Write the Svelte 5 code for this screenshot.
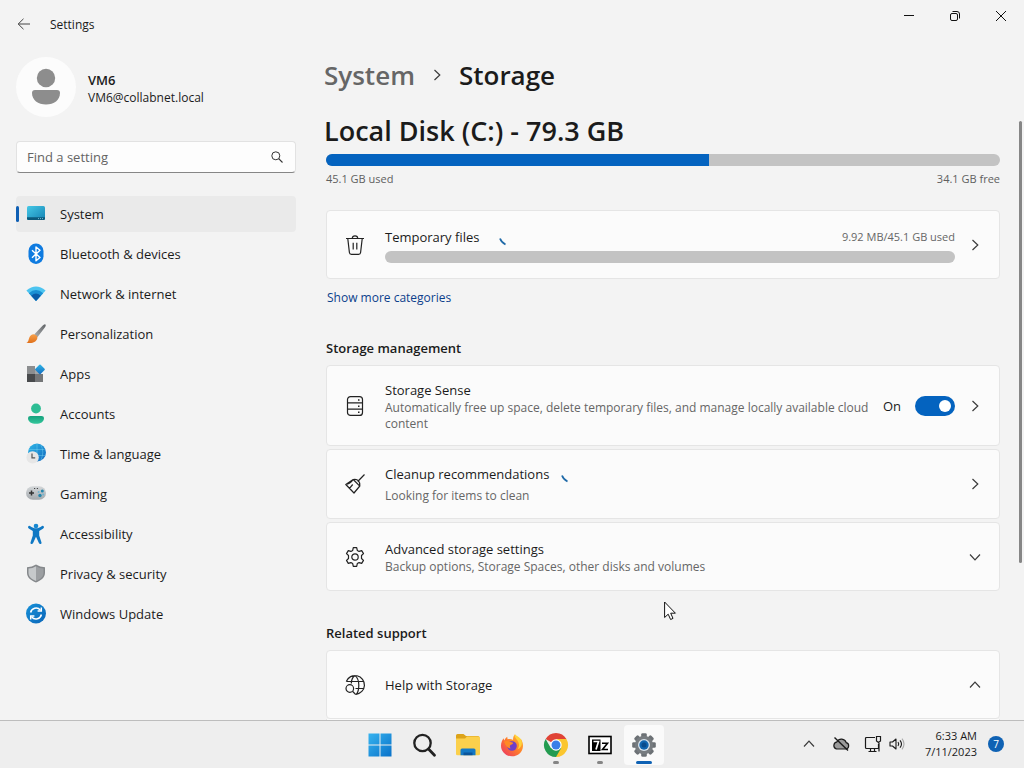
<script>
  let search = $state("");
  let senseOn = $state(true);
  let current = $state("System");

  const nav = [
    "System",
    "Bluetooth & devices",
    "Network & internet",
    "Personalization",
    "Apps",
    "Accounts",
    "Time & language",
    "Gaming",
    "Accessibility",
    "Privacy & security",
    "Windows Update",
  ];

  const disk = { used: 45.1, free: 34.1, total: 79.3 };
  let usedPercent = $derived((disk.used / disk.total) * 100);

  const apps = [
    { name: "Start", state: "" },
    { name: "Search", state: "" },
    { name: "File Explorer", state: "" },
    { name: "Firefox", state: "" },
    { name: "Chrome", state: "running" },
    { name: "7-Zip", state: "running" },
    { name: "Settings", state: "active" },
  ];
</script>

{#snippet chevron(dir)}
  <svg class="chevron {dir}" viewBox="0 0 12 12" width="12" height="12" aria-hidden="true">
    <path d="M3.5 1 L8.8 6 L3.5 11" fill="none" stroke="#3a3a3a" stroke-width="1.2" />
  </svg>
{/snippet}

{#snippet spinner()}
  <svg class="spinner" viewBox="0 0 16 16" width="16" height="16" aria-hidden="true">
    <path d="M1 9.5 Q2.500 13.5 6.500 15.500" fill="none" stroke="#1f6aa8" stroke-width="1.8" />
  </svg>
{/snippet}

{#snippet navIcon(name)}
  <svg viewBox="0 0 20 20" width="20" height="20" aria-hidden="true">
    {#if name === "System"}
      <rect x="1" y="2" width="18" height="14" rx="1.6" fill="url(#g-screen)" />
      <path d="M1 13.2h18v1.2a1.6 1.6 0 0 1-1.6 1.6H2.6A1.6 1.6 0 0 1 1 14.4z" fill="#0c5a7c" />
      <path d="M12 14.6h1m1 0h1m1 0h1" stroke="#8fd3ea" stroke-width="0.8" />
    {:else if name === "Bluetooth & devices"}
      <rect x="2.5" y="-0.5" width="15" height="20.5" rx="7.4" fill="#0f7be0" />
      <path d="M6 6.2l8 7.3-4 3.3V3l4 3.3-8 7.4" fill="none" stroke="#fff" stroke-width="1.4" stroke-linejoin="round" />
    {:else if name === "Network & internet"}
      <path d="M0.4 6.6Q10 -1.6 19.6 6.6L10 17z" fill="#4cc4f0" />
      <path d="M2.8 9.2Q10 3 17.2 9.2L10 17z" fill="#1a90d4" />
      <path d="M5.2 11.8Q10 7.4 14.8 11.8L10 17z" fill="#0b5ca8" />
    {:else if name === "Personalization"}
      <path d="M19.4 0.4c.8.7.1 2.1-.6 3.1l-7.4 9.7-3.2-2.6 8.3-8.8c1-1 2.200-2 2.900-1.400z" fill="url(#g-grey)" />
      <path d="M8.300 10.400c2 .3 3.300 1.600 3.100 3.300-.5 4.800-6.400 6.200-11 4.800 1.900-.7 2-1.800 2.500-3.800.6-2.500 2.800-4.600 5.400-4.300z" fill="url(#g-orange)" />
    {:else if name === "Apps"}
      <path d="M1 2h8v8H1z" fill="#8b8d8f" />
      <path d="M1 10h8v8H1z" fill="#484a4c" />
      <path d="M9 10h8v8H9z" fill="#747678" />
      <path d="M9 5h4v5H9z" fill="#a5a7a8" />
      <rect x="10.300" y="1.700" width="7.400" height="7.400" rx="0.900" transform="rotate(45 14 5.400)" fill="url(#g-blue)" />
    {:else if name === "Accounts"}
      <circle cx="10" cy="4.500" r="4.900" fill="#2dbd94" />
      <path d="M2 14q0-2 2.500-2h11q2.500 0 2.500 2c0 4-3.600 5.800-8 5.800S2 18 2 14z" fill="url(#g-green)" />
    {:else if name === "Time & language"}
      <circle cx="11" cy="8.500" r="9" fill="url(#g-blue)" />
      <path d="M11 0v17M3 5.500h15.500M3 11.500h16M15 1q3.500 7 0 15" fill="none" stroke="#7ddcf5" stroke-width="0.400" />
      <circle cx="6.600" cy="13.400" r="6.200" fill="#e6e6e6" />
      <path d="M6 9.500v4.300h3.200" fill="none" stroke="#555" stroke-width="1.200" />
    {:else if name === "Gaming"}
      <rect x="0" y="2.200" width="20" height="13.600" rx="6.800" fill="url(#g-pad)" />
      <path d="M5.500 6.500v5M3 9h5" stroke="#333" stroke-width="1.500" />
      <path d="M8 4.500h1.200m1.600 0H12" stroke="#444" stroke-width="1" />
      <circle cx="14" cy="11.500" r="1.700" fill="#2587ad" />
      <circle cx="16.300" cy="7" r="1.500" fill="#2587ad" />
      <circle cx="12.600" cy="8" r="1" fill="#71b5cf" />
      <circle cx="17.200" cy="10.400" r="1" fill="#71b5cf" />
    {:else if name === "Accessibility"}
      <circle cx="10" cy="2" r="2.300" fill="#1787d0" />
      <path d="M2.200 2.600c.6-1.200 1.700-.7 2.500-.2C8 4.800 12 4.800 15.300 2.400c.8-.5 1.900-1 2.500.2.500 1-.1 1.800-.9 2.200L13.200 7v4.400l2.300 7c.3 1.500-1.700 2.200-2.500.8L10 12.800 7 19.200c-.8 1.400-2.800.7-2.500-.8l2.300-7V7L3.100 4.800c-.8-.4-1.400-1.200-.9-2.200z" fill="#0f78c4" />
    {:else if name === "Privacy & security"}
      <path d="M10 0.600q4 2.600 9 2.600v5.500c0 4.800-4 7.800-9 9.800-5-2-9-5-9-9.800V3.200q5 0 9-2.600z" fill="#85888b" />
      <path d="M10 2.300q3.500 2.100 7.500 2.300v4.200c0 4-3.300 6.500-7.500 8.200z" fill="#9c9fa2" />
      <path d="M10 2.300Q6.500 4.400 2.500 4.600v4.200c0 4 3.300 6.500 7.500 8.200z" fill="#c6c9cb" />
    {:else}
      <circle cx="10" cy="9.500" r="10" fill="url(#g-update)" />
      <path d="M4.600 8.500A5.600 5.600 0 0 1 14.300 6M15.400 10.500A5.600 5.600 0 0 1 5.700 13" fill="none" stroke="#fff" stroke-width="1.500" />
      <path d="M15.300 3.500v3.500h-3.700M4.700 15.500V12h3.700" fill="none" stroke="#fff" stroke-width="1.500" />
    {/if}
  </svg>
{/snippet}

{#snippet appIcon(name)}
  <svg viewBox="0 0 24 24" width="24" height="24" aria-hidden="true">
    {#if name === "Start"}
      <path d="M.5.500h11v11H.5zM12.500.500h11v11h-11zM.5 12.500h11v11H.5zM12.500 12.500h11v11h-11z" fill="url(#g-start)" />
    {:else if name === "Search"}
      <circle cx="10.500" cy="10" r="8.200" fill="none" stroke="#222" stroke-width="2.300" />
      <path d="M16.500 16l6 6.200" stroke="#222" stroke-width="2.800" stroke-linecap="round" />
    {:else if name === "File Explorer"}
      <path d="M0 2.500Q0 1 1.500 1h6L10 3h12q1.500 0 1.500 1.500V8H0z" fill="#dca31a" />
      <path d="M0 5.500h9L11 3.500h11.500q1.500 0 1.500 1.500v16q0 1.200-1.500 1.200h-21Q0 22.200 0 21z" fill="#fbd04c" />
      <path d="M4.500 22.200V17q0-1.500 1.500-1.500h12q1.500 0 1.500 1.500v5.200z" fill="#1479c6" />
      <path d="M7.500 22.200v-2.700h9v2.700z" fill="#0b559b" />
    {:else if name === "Firefox"}
      <path d="M12 23.300C5.800 23.300 1 18.500 1 12.700c0-3 1.200-5.800 2.600-7.500l.6 2.200c.7-1.300 2-3 3-3.700l.4 2.600c2-.5 4-.2 5.500.6-.3-2 .7-4.500 2-5.600.7 2.500 3 3.400 4.800 5.700l.8-1.300c1.500 2 2.400 4.500 2.300 7.200-.2 6-5 10.400-11 10.400z" fill="url(#g-fox)" />
      <circle cx="12" cy="13" r="4.800" fill="#6f3ec9" />
      <path d="M4 8.500c3-1.500 5 .2 6.500.5 1.700.3 2.800.4 2.700 1.100-.4 1.500-2.200 1.400-3.100 2.400-.6.800-.3 2 .7 2.700-2.600.6-5-1.600-6.800-6.700z" fill="#ff8a25" />
      <path d="M14.500 1.500c0 4 4.300 5.800 4.500 10 .1 2-.6 3.700-1.700 5 4.200-1.600 5.200-5.500 4.200-9-.6-2.200-3-3.800-7-6z" fill="#ffd43b" />
    {:else if name === "Chrome"}
      <path d="M12 12L1.600 6A12 12 0 0 1 22.400 6z" fill="#e04336" />
      <path d="M12 12v12A12 12 0 0 0 22.400 6H12z" fill="#fbc62e" />
      <path d="M6.800 15L1.600 6A12 12 0 0 0 12 24l5.200-9z" fill="#239b50" />
      <circle cx="12" cy="12" r="5.700" fill="#fff" />
      <circle cx="12" cy="12" r="4.500" fill="#397fe8" />
    {:else if name === "7-Zip"}
      <rect x="1" y="3.500" width="22" height="17" fill="#fff" stroke="#000" stroke-width="1.600" />
      <rect x="4" y="6.500" width="8.500" height="11.500" fill="#000" />
      <path d="M5.500 8.500h5L8 16.500" fill="none" stroke="#fff" stroke-width="1.700" />
      <path d="M14 10.200h5.500l-5 6.300H20" fill="none" stroke="#000" stroke-width="1.600" />
    {:else}
      {#each [0, 45, 90, 135] as angle}
        <rect x="9.200" y="0.200" width="5.600" height="23.600" rx="1.400" transform="rotate({angle} 12 12)" fill="#6c7175" />
      {/each}
      <circle cx="12" cy="12" r="9.200" fill="#777c80" />
      <circle cx="12" cy="12" r="6" fill="#d9e4ec" />
      <circle cx="12" cy="12" r="4.700" fill="#1266b0" />
      <circle cx="12" cy="12" r="2.500" fill="#0a4c8c" />
    {/if}
  </svg>
{/snippet}

<svg class="defs" width="0" height="0" aria-hidden="true">
  <defs>
    <linearGradient id="g-screen" x1="0" y1="0" x2="1" y2="1"><stop offset="0" stop-color="#45c8e6" /><stop offset="1" stop-color="#1583b4" /></linearGradient>
    <linearGradient id="g-blue" x1="0" y1="0" x2="1" y2="1"><stop offset="0" stop-color="#30b8e8" /><stop offset="1" stop-color="#1268be" /></linearGradient>
    <linearGradient id="g-update" x1="0" y1="0" x2="1" y2="1"><stop offset="0" stop-color="#1691d9" /><stop offset="1" stop-color="#0c66b8" /></linearGradient>
    <linearGradient id="g-grey" x1="1" y1="0" x2="0" y2="1"><stop offset="0" stop-color="#5f6265" /><stop offset="1" stop-color="#aeb1b3" /></linearGradient>
    <linearGradient id="g-orange" x1="0" y1="0" x2="0" y2="1"><stop offset="0" stop-color="#f6a04b" /><stop offset="1" stop-color="#e0701a" /></linearGradient>
    <linearGradient id="g-green" x1="0" y1="0" x2="0" y2="1"><stop offset="0" stop-color="#14a07c" /><stop offset="1" stop-color="#35c79c" /></linearGradient>
    <linearGradient id="g-pad" x1="0" y1="0" x2="0" y2="1"><stop offset="0" stop-color="#d4d7d9" /><stop offset="1" stop-color="#a4a9ad" /></linearGradient>
    <linearGradient id="g-start" gradientUnits="userSpaceOnUse" x1="0" y1="0" x2="24" y2="24"><stop offset="0" stop-color="#38b5f0" /><stop offset="1" stop-color="#0870c8" /></linearGradient>
    <linearGradient id="g-fox" x1="1" y1="0" x2="0" y2="1"><stop offset="0" stop-color="#ffc52e" /><stop offset="0.500" stop-color="#ff7b2c" /><stop offset="1" stop-color="#e92f6b" /></linearGradient>
  </defs>
</svg>

<div class="desktop">
  <div class="window">
    <header class="titlebar">
      <button class="back" aria-label="Back">
        <svg viewBox="0 0 14 14" width="14" height="14"><path d="M13 7H1.200M6.500 1.800L1.200 7l5.300 5.200" fill="none" stroke="#444" /></svg>
      </button>
      <span class="title">Settings</span>
      <div class="controls">
        <button aria-label="Minimize">
          <svg viewBox="0 0 12 12" width="12" height="12"><path d="M1 5.500h10" stroke="#111" /></svg>
        </button>
        <button aria-label="Restore">
          <svg viewBox="0 0 12 12" width="12" height="12">
            <rect x="1.500" y="3.500" width="7" height="7" rx="1.500" fill="none" stroke="#111" />
            <path d="M3.500 1.500H8q2.500 0 2.500 2.500v4.500" fill="none" stroke="#111" />
          </svg>
        </button>
        <button aria-label="Close">
          <svg viewBox="0 0 12 12" width="12" height="12"><path d="M1 1l10 10M11 1L1 11" stroke="#111" /></svg>
        </button>
      </div>
    </header>

    <div class="body">
      <aside>
        <div class="profile">
          <div class="avatar">
            <svg viewBox="0 0 60 60" width="60" height="60" aria-hidden="true">
              <circle cx="30" cy="21" r="9.200" fill="#8d8d8d" />
              <path d="M16 36q0-3 3-3h22q3 0 3 3c0 7-6 11.500-14 11.500S16 43 16 36z" fill="#8d8d8d" />
            </svg>
          </div>
          <div class="who">
            <div class="user">VM6</div>
            <div class="email">VM6@collabnet.local</div>
          </div>
        </div>

        <div class="search">
          <input type="text" placeholder="Find a setting" aria-label="Find a setting" bind:value={search} />
          <svg viewBox="0 0 12 12" width="12" height="12" aria-hidden="true">
            <circle cx="4.800" cy="4.800" r="4" fill="none" stroke="#333" />
            <path d="M7.700 7.700l3.800 3.800" stroke="#333" stroke-width="1.100" />
          </svg>
        </div>

        <nav>
          {#each nav as item}
            <button class="item" class:selected={current === item} onclick={() => (current = item)}>
              {@render navIcon(item)}
              <span>{item}</span>
            </button>
          {/each}
        </nav>
      </aside>

      <main>
        <h1>
          <a href="#system">System</a>
          {@render chevron("right")}
          <span>Storage</span>
        </h1>
        <h2>Local Disk (C:) - {disk.total} GB</h2>
        <div class="bar">
          <div class="fill" style="width: {usedPercent}%"></div>
        </div>
        <div class="legend">
          <span>{disk.used} GB used</span>
          <span>{disk.free} GB free</span>
        </div>

        <button class="card temp">
          <svg class="icon" viewBox="0 0 20 20" width="20" height="20" aria-hidden="true">
            <path d="M1 3.500h18M7.300 3.300q0-2.500 2.700-2.500t2.700 2.500M2.800 3.700l1.600 13.800q.2 1.800 2 1.800h7.200q1.800 0 2-1.800l1.600-13.800M8.200 7.800v6.700M11.800 7.800v6.700" fill="none" stroke="#222" stroke-width="1.200" />
          </svg>
          <span class="text">
            <span class="line">
              <span class="name">Temporary files</span>
              {@render spinner()}
              <span class="amount">9.92 MB/45.1 GB used</span>
            </span>
            <span class="bar"></span>
          </span>
          {@render chevron("right")}
        </button>
        <a class="more" href="#categories">Show more categories</a>

        <h3>Storage management</h3>
        <div class="cards">
          <div class="card sense">
            <svg class="icon" viewBox="0 0 20 20" width="20" height="20" aria-hidden="true">
              <rect x="2.500" y="0.600" width="15" height="18.800" rx="3" fill="none" stroke="#222" stroke-width="1.200" />
              <path d="M2.500 6.800h15M2.500 13.200h15" stroke="#222" stroke-width="1.200" />
              <path d="M13 4h1.500M13 10.300h1.500M13 16.300h1.500" stroke="#222" stroke-width="1.400" />
            </svg>
            <span class="text">
              <span class="name">Storage Sense</span>
              <span class="desc">Automatically free up space, delete temporary files, and manage locally available cloud content</span>
            </span>
            <label class="toggle">
              <span>{senseOn ? "On" : "Off"}</span>
              <input type="checkbox" role="switch" aria-label="Storage Sense" bind:checked={senseOn} />
            </label>
            {@render chevron("right")}
          </div>

          <button class="card cleanup">
            <svg class="icon" viewBox="0 0 20 20" width="20" height="20" aria-hidden="true">
              <path d="M19.500 0.500l-6.800 7M8.200 5.500q3.400-.8 5.300 1.400t1.300 5.100L9 19 .8 10.500zM8.200 5.500l6.600 6.700M.8 10.500Q5 10.300 8.200 5.500M4.500 14.300l3.200-3.800" fill="none" stroke="#222" stroke-width="1.200" stroke-linejoin="round" />
            </svg>
            <span class="text">
              <span class="line">
                <span class="name">Cleanup recommendations</span>
                {@render spinner()}
              </span>
              <span class="desc">Looking for items to clean</span>
            </span>
            {@render chevron("right")}
          </button>

          <button class="card">
            <svg class="icon" viewBox="0 0 20 20" width="20" height="20" aria-hidden="true">
              <path d="M8.300.700h3.400l.6 2.700 1.800 1 2.600-.8 1.800 3-2 1.900v3l2 1.900-1.800 3-2.600-.8-1.800 1-.6 2.700H8.300l-.6-2.700-1.800-1-2.600.8-1.800-3 2-1.900v-3l-2-1.900 1.800-3 2.600.8 1.800-1z" fill="none" stroke="#222" stroke-width="1.200" stroke-linejoin="round" />
              <circle cx="10" cy="10" r="3.200" fill="none" stroke="#222" stroke-width="1.200" />
            </svg>
            <span class="text">
              <span class="name">Advanced storage settings</span>
              <span class="desc">Backup options, Storage Spaces, other disks and volumes</span>
            </span>
            {@render chevron("down")}
          </button>
        </div>

        <h3>Related support</h3>
        <div class="group">
          <button class="card">
            <svg class="icon" viewBox="0 0 20 20" width="20" height="20" aria-hidden="true">
              <path d="M1.300 6.500A9.400 9.400 0 1 1 11 19.300M1.300 6.500h17.400M10.500 13.500h8.200M6.300 8.500Q6.500 2.500 10 .6q3.800 3 3.800 9.400T11.500 19" fill="none" stroke="#222" stroke-width="1.200" />
              <circle cx="4.800" cy="13.500" r="3.800" fill="none" stroke="#222" stroke-width="1.200" />
              <path d="M7.500 16.300l3.300 3.300" stroke="#222" stroke-width="1.300" />
            </svg>
            <span class="text"><span class="name">Help with Storage</span></span>
            {@render chevron("up")}
          </button>
          <div class="panel"></div>
        </div>
      </main>
      <div class="scrollbar"></div>
    </div>
  </div>

  <footer class="taskbar">
    <div></div>
    <div class="apps">
      {#each apps as app}
        <button class="app {app.state}" aria-label={app.name}>{@render appIcon(app.name)}</button>
      {/each}
    </div>
    <div class="tray">
      <button aria-label="Show hidden icons">{@render chevron("up")}</button>
      <button aria-label="OneDrive">
        <svg viewBox="0 0 18 16" width="18" height="16">
          <path d="M4.500 13h9.300a3.200 3.200 0 0 0 .4-6.300A5 5 0 0 0 5 5.800 3.700 3.700 0 0 0 4.500 13z" fill="#9b9b9b" stroke="#1a1a1a" stroke-width="1.200" />
          <path d="M2.500 1.500l13.500 13" stroke="#1a1a1a" stroke-width="1.400" />
        </svg>
      </button>
      <button class="status" aria-label="Network and volume">
        <svg viewBox="0 0 18 18" width="18" height="18">
          <path d="M11 2.500H2.500q-1 0-1 1v9q0 1 1 1h12V9M4.500 16.500h8M6.500 13.500v3M10.500 13.500v3M15 8v8.500" fill="none" stroke="#1a1a1a" stroke-width="1.200" />
          <path d="M12.500 1.500h4v4.500l-2 1.500-2-1.500z" fill="none" stroke="#1a1a1a" stroke-width="1.200" />
        </svg>
        <svg viewBox="0 0 16 16" width="16" height="16">
          <path d="M1 6v4h2.500L7 13V3L3.500 6z" fill="none" stroke="#1a1a1a" stroke-width="1.100" stroke-linejoin="round" />
          <path d="M9 6q1.500 2 0 4M11 4.300q3 3.700 0 7.400" fill="none" stroke="#1a1a1a" stroke-width="1.100" />
          <path d="M13 2.700q4 5.300 0 10.600" fill="none" stroke="#aaa" stroke-width="1.100" />
        </svg>
      </button>
      <button class="clock">
        <span>6:33 AM</span>
        <span>7/11/2023</span>
      </button>
      <button class="badge" aria-label="7 notifications">7</button>
    </div>
  </footer>

  <svg class="cursor" viewBox="0 0 12 19" width="12" height="19" aria-hidden="true">
    <path d="M.6 1v15.500l3.600-3.300 2.400 5.300 2.400-1.100-2.300-5.200h4.700z" fill="#fff" stroke="#111" stroke-linejoin="round" />
  </svg>
</div>

<style>
  :global(body) {
    margin: 0;
    background: #f3f3f3;
  }

  .desktop {
    position: relative;
    height: 100vh;
    display: flex;
    flex-direction: column;
    overflow: hidden;
    font-family: "Open Sans", "Noto Sans", sans-serif;
    font-size: 13px;
    line-height: 20px;
    color: #1b1b1b;
  }

  .defs {
    position: absolute;
  }

  button {
    border: 0;
    padding: 0;
    background: none;
    font: inherit;
    color: inherit;
    text-align: left;
  }

  svg {
    display: block;
    flex: none;
    overflow: visible;
  }

  .window {
    flex: 1;
    min-height: 0;
    display: flex;
    flex-direction: column;
    background: #f3f3f3;
  }

  .titlebar {
    display: flex;
    align-items: center;
    height: 48px;
    flex: none;
  }

  .back {
    padding: 8px;
    margin-left: 9px;
  }

  .title {
    margin-left: 11px;
    padding-top: 2px;
    font-size: 12px;
  }

  .controls {
    display: flex;
    align-self: flex-start;
    margin-left: auto;
  }

  .controls button {
    width: 46px;
    height: 32px;
    display: grid;
    place-items: center;
  }

  .body {
    flex: 1;
    min-height: 0;
    display: flex;
  }

  aside {
    width: 280px;
    flex: none;
    padding: 9px 16px 0;
  }

  .profile {
    display: flex;
    align-items: center;
    gap: 12px;
  }

  .avatar {
    border-radius: 50%;
    background: #fcfcfc;
  }

  .who {
    padding-top: 2px;
  }

  .user {
    font-weight: 600;
  }

  .email {
    font-size: 12px;
    line-height: 16px;
  }

  .search {
    display: flex;
    align-items: center;
    box-sizing: border-box;
    height: 32px;
    margin: 24px 0 23px;
    padding: 0 12px 0 10px;
    border: 1px solid #e2e2e2;
    border-bottom-color: #868686;
    border-radius: 4px;
    background: #fdfdfd;
  }

  .search input {
    flex: 1;
    min-width: 0;
    border: 0;
    padding: 0;
    background: none;
    font: inherit;
    outline: none;
  }

  .search input::placeholder {
    color: #646464;
    opacity: 1;
  }

  nav {
    display: flex;
    flex-direction: column;
    gap: 4px;
  }

  .item {
    position: relative;
    display: flex;
    align-items: center;
    gap: 14px;
    height: 36px;
    padding: 0 10px;
    border-radius: 4px;
  }

  .selected {
    background: #eaeaea;
  }

  .selected::before {
    content: "";
    position: absolute;
    left: 0;
    width: 3px;
    height: 16px;
    border-radius: 2px;
    background: #0f5fb4;
  }

  main {
    flex: 1;
    min-width: 0;
    overflow: hidden;
    padding: 9px 19px 0 14px;
  }

  h1,
  h2,
  h3 {
    margin: 0;
    font-weight: 600;
  }

  h1,
  h2 {
    font-size: 26px;
    line-height: 36px;
    margin-left: -2px;
  }

  h1 {
    display: flex;
    align-items: center;
    gap: 16px;
  }

  h1 a {
    color: #666;
    text-decoration: none;
  }

  h2 {
    margin-top: 20px;
    font-size: 27px;
  }

  .bar {
    display: block;
    height: 12px;
    border-radius: 6px;
    background: #c3c3c3;
    overflow: hidden;
  }

  h2 + .bar {
    margin-top: 5px;
  }

  .fill {
    height: 100%;
    background: #0463bf;
  }

  .legend {
    display: flex;
    justify-content: space-between;
    margin: 5px 0 23px;
    font-size: 11px;
    line-height: 16px;
    color: #5f5f5f;
  }

  .card {
    display: flex;
    align-items: center;
    box-sizing: border-box;
    width: 100%;
    min-height: 69px;
    padding: 8px 18px;
    border: 1px solid #e5e5e5;
    border-radius: 4px;
    background: #fbfbfb;
  }

  .icon {
    margin-right: 20px;
  }

  .text {
    flex: 1;
    min-width: 0;
    display: flex;
    flex-direction: column;
  }

  .line {
    display: flex;
    align-items: center;
    margin-bottom: 4px;
  }

  .desc,
  .amount {
    font-size: 12px;
    line-height: 16px;
    color: #666;
  }

  .amount {
    margin-left: auto;
    font-size: 11px;
  }

  .spinner {
    margin-left: 12px;
  }

  .temp .spinner {
    margin-left: 20px;
  }

  .card > .chevron {
    margin-left: 14px;
  }

  .down {
    transform: rotate(90deg);
  }

  .up {
    transform: rotate(-90deg);
  }

  .more {
    display: inline-block;
    margin: 9px 0 0 1px;
    font-size: 12px;
    color: #0c3f8c;
    text-decoration: none;
  }

  h3 {
    margin: 30px 0 7px;
    font-size: 13px;
  }

  .cards {
    display: flex;
    flex-direction: column;
    gap: 3px;
    padding-bottom: 2px;
  }

  .sense {
    min-height: 81px;
  }

  .cleanup {
    min-height: 70px;
  }

  .toggle {
    display: flex;
    align-items: center;
    gap: 14px;
    margin-left: 8px;
  }

  .toggle input {
    appearance: none;
    display: flex;
    align-items: center;
    justify-content: flex-start;
    width: 40px;
    height: 20px;
    margin: 0;
    padding: 0 4px;
    box-sizing: border-box;
    border-radius: 10px;
    background: #8a8a8a;
  }

  .toggle input:checked {
    justify-content: flex-end;
    background: #0463bf;
  }

  .toggle input::before {
    content: "";
    width: 12px;
    height: 12px;
    border-radius: 50%;
    background: #fff;
  }

  .panel {
    height: 60px;
    border: 1px solid #e5e5e5;
    border-top: 0;
    background: #fbfbfb;
  }

  .scrollbar {
    flex: none;
    width: 3px;
    height: 442px;
    margin: 73px 2px 0 0;
    border-radius: 2px;
    background: #868686;
  }

  .taskbar {
    flex: none;
    display: grid;
    grid-template-columns: 1fr auto 1fr;
    align-items: center;
    box-sizing: border-box;
    height: 48px;
    border-top: 1px solid #bdbdbd;
    background: #eee;
  }

  .apps {
    display: flex;
    gap: 4px;
  }

  .app {
    position: relative;
    width: 40px;
    height: 40px;
    display: grid;
    place-items: center;
    border-radius: 4px;
  }

  .active {
    background: #fafafa;
  }

  .running::after,
  .active::after {
    content: "";
    position: absolute;
    bottom: 1px;
    left: 17px;
    width: 6px;
    height: 3px;
    border-radius: 2px;
    background: #858585;
  }

  .active::after {
    left: 12px;
    width: 16px;
    background: #0f62b4;
  }

  .tray {
    display: flex;
    align-items: center;
    justify-content: flex-end;
    padding: 0 20px 2px 0;
  }

  .tray > button {
    margin-left: 17px;
  }

  .tray > .status {
    display: flex;
    align-items: center;
    gap: 7px;
    margin-left: 14px;
  }

  .tray > .clock {
    display: flex;
    flex-direction: column;
    align-items: flex-end;
    margin-left: 20px;
    font-size: 11px;
    line-height: 16px;
  }

  .tray > .badge {
    width: 16px;
    height: 16px;
    margin-left: 11px;
    border-radius: 50%;
    background: #0f62b4;
    color: #fff;
    font-size: 10px;
    line-height: 16px;
    text-align: center;
  }

  .cursor {
    position: absolute;
    left: 664px;
    top: 601px;
  }
</style>
